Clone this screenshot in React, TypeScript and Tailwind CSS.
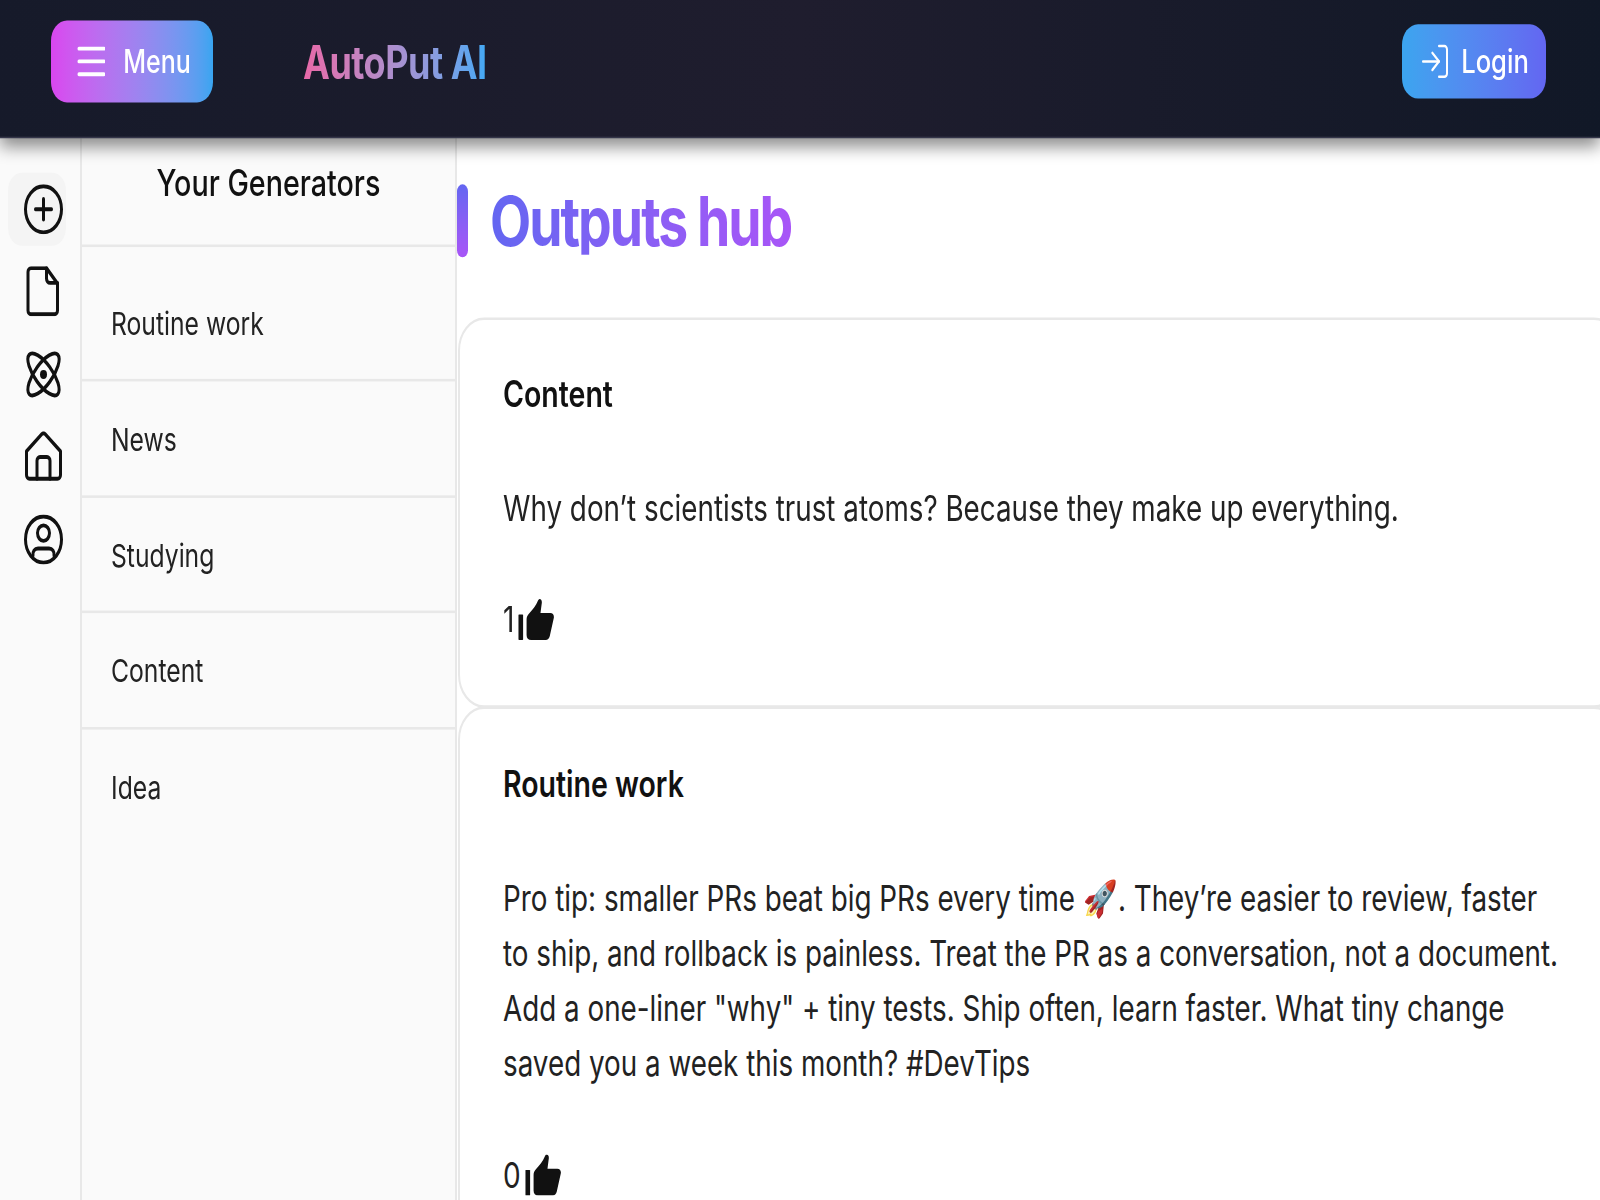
import React from 'react';
import { LogIn } from 'lucide-react';

const generators = ['Routine work', 'News', 'Studying', 'Content', 'Idea'];

const ThumbIcon = () => (
  <svg width="44" height="32" viewBox="0 0 38 32" preserveAspectRatio="none" fill="currentColor" className="text-[#111] ml-[1px]">
    <rect x="3" y="12" width="4" height="20" rx="0.5" />
    <path d="M10 16c0-2 .8-3.200 2-4.500 3-3 6-6 8-10.500.5-1 1.500-1.500 2.500-.5.8.8.8 2 .5 3.500L22 11h8.500c2.200 0 3.500 1.800 3 3.800L30 29c-.5 1.800-1.800 3-3.500 3H14c-2.500 0-4-1.500-4-4z" />
  </svg>
);

const railIcons = [
  <svg key="plus" width="39" height="39" viewBox="0 0 39 39" fill="none" stroke="currentColor" strokeWidth="3" strokeLinecap="round">
    <circle cx="19.500" cy="19.500" r="18" />
    <path d="M19.500 11.500v16M11.500 19.500h16" />
  </svg>,
  <svg key="file" width="39" height="39" viewBox="0 0 39 39" fill="none" stroke="currentColor" strokeWidth="3" strokeLinecap="round" strokeLinejoin="round">
    <path d="M7 1.500h15.500l11 12V34.500a3 3 0 0 1-3 3H7a3 3 0 0 1-3-3V4.500a3 3 0 0 1 3-3z" />
    <path d="M22.500 1.500v8a3.500 3.500 0 0 0 3.500 3.500h7.500" />
  </svg>,
  <svg key="atom" width="39" height="39" viewBox="0 0 39 39" fill="none" stroke="currentColor" strokeWidth="3">
    <ellipse cx="19.500" cy="19.500" rx="8.500" ry="21" transform="rotate(43 19.500 19.500)" />
    <ellipse cx="19.500" cy="19.500" rx="8.500" ry="21" transform="rotate(-43 19.500 19.500)" />
    <circle cx="19.500" cy="19.500" r="3.500" fill="currentColor" stroke="none" />
  </svg>,
  <svg key="home" width="39" height="39" viewBox="0 0 39 39" fill="none" stroke="currentColor" strokeWidth="3" strokeLinecap="round" strokeLinejoin="round">
    <path d="M2.500 15.500 18 2a2.500 2.500 0 0 1 3 0l15.500 13.500V34a3 3 0 0 1-3 3h-28a3 3 0 0 1-3-3z" />
    <path d="M13 37V23a3 3 0 0 1 3-3h7a3 3 0 0 1 3 3v14" />
  </svg>,
  <svg key="user" width="39" height="39" viewBox="0 0 39 39" fill="none" stroke="currentColor" strokeWidth="3" strokeLinecap="round">
    <circle cx="19.500" cy="19.500" r="18" />
    <circle cx="19.500" cy="14.500" r="6" />
    <path d="M9 32c-.5-3 1.500-5.500 5-5.500h11c3.500 0 5.500 2.500 5 5.500" />
  </svg>,
];

const Card: React.FC<{ title: string; likes: number; className: string; children: React.ReactNode }> = ({ title, likes, className, children }) => (
  <div className={`border-2 border-[#e8e8e8] rounded-[26px] bg-white pl-[43px] pr-[58px] pb-[51px] mr-[-20px] ${className}`}>
    <h3 className="text-[28.500px] font-semibold leading-[43px] text-[#111]">{title}</h3>
    <p className="mt-[47px] text-[27.800px] leading-[43px] text-[#222]">{children}</p>
    <div className="mt-[49px] flex items-end text-[28px] leading-[32px] text-[#222]">
      <span>{likes}</span>
      <ThumbIcon />
    </div>
  </div>
);

export default function App() {
  return (
    <div className="w-[1600px] h-[1200px] overflow-hidden bg-white font-['Inter','Liberation_Sans',sans-serif]">
      <div className="origin-top-left scale-y-[1.28] h-[938px] flex flex-col">
        {/* Header */}
        <header className="relative z-10 h-[107.500px] shrink-0 flex items-center justify-between pl-[51px] pr-[54px] pb-[10px] border-b border-[#35364a] bg-gradient-to-r from-[#161a2a] via-[#1f1d2e] to-[#111827] shadow-[0_7px_14px_rgba(0,0,0,0.45)]">
          <div className="flex items-center gap-[90px]">
            <button className="w-[162px] h-[64px] pl-[4px] rounded-[16px] flex items-center justify-center gap-[18px] text-white text-[25px] font-medium bg-gradient-to-r from-[#d946ef] to-[#38a5f0]">
              <svg width="28" height="28" viewBox="0 0 28 28" stroke="currentColor" strokeWidth="3" strokeLinecap="round">
                <path d="M2 4h25M2 14h25M2 24h25" />
              </svg>
              <span>Menu</span>
            </button>
            <span className="mt-[2px] text-[36px] font-bold leading-none tracking-[-0.5px] bg-gradient-to-r from-[#e868a8] to-[#3fa9f5] bg-clip-text text-transparent">
              AutoPut AI
            </span>
          </div>
          <button className="w-[144px] h-[58px] rounded-[16px] flex items-center justify-center gap-[10px] text-white text-[25.600px] font-medium bg-gradient-to-r from-[#3ba5ef] to-[#6366f1]">
            <LogIn size={32} strokeWidth={1.5} />
            <span>Login</span>
          </button>
        </header>

        <div className="flex flex-1 min-h-0">
          {/* Icon rail */}
          <aside className="w-[82px] shrink-0 bg-[#fafafa] border-r-2 border-[#e8e8e8] pt-[27px] pl-[8px] text-[#111]">
            {railIcons.map((icon, i) => (
              <div
                key={i}
                className={`w-[58px] h-[57px] mb-[7.500px] flex items-center pl-[16px] rounded-[14px] ${i === 0 ? 'bg-[#f4f4f4]' : ''}`}
              >
                {icon}
              </div>
            ))}
          </aside>

          {/* Generators list */}
          <aside className="w-[375px] shrink-0 bg-[#fafafa] border-r-2 border-[#e8e8e8]">
            <div className="h-[85px] pt-[12px] border-b-2 border-[#e8e8e8] text-center text-[28.700px] leading-[46px] font-medium text-[#111]">
              Your Generators
            </div>
            <div className="pt-[15px]">
              {generators.map((name, i) => (
                <div
                  key={name}
                  className={`h-[90.500px] pl-[29px] flex items-center text-[24.700px] text-[#222] ${i < generators.length - 1 ? 'pt-[3px] border-b-2 border-[#e8e8e8]' : 'pt-[1px]'}`}
                >
                  {name}
                </div>
              ))}
            </div>
          </aside>

          {/* Outputs */}
          <main className="flex-1 min-w-0">
            <div className="mt-[36px] flex items-center h-[57px]">
              <span className="w-[11px] h-[57px] rounded-full bg-gradient-to-b from-[#6366f1] to-[#a855f7]" />
              <h1 className="ml-[22px] pt-[1px] text-[53.500px] font-bold tracking-[-2px] leading-none bg-gradient-to-r from-[#6366f1] to-[#a855f7] bg-clip-text text-transparent">
                Outputs hub
              </h1>
            </div>
            <div className="mt-[47px] ml-[1px] flex flex-col">
              <Card title="Content" likes={1} className="pt-[36px]">
                Why don’t scientists trust atoms? Because they make up everything.
              </Card>
              <Card title="Routine work" likes={0} className="pt-[37px] -mt-[1px]">
                Pro tip: smaller PRs beat big PRs every time 🚀. They’re easier to review, faster to ship, and rollback is painless. Treat the PR as a conversation, not a document. Add a one-liner "why" + tiny tests. Ship often, learn faster. What tiny change saved you a week this month? #DevTips
              </Card>
            </div>
          </main>
        </div>
      </div>
    </div>
  );
}
